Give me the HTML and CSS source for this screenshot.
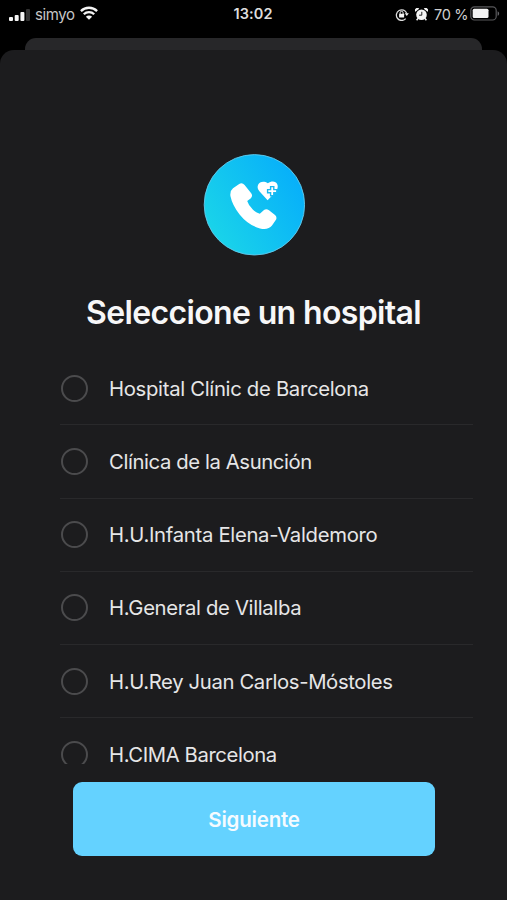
FILE: index.html
```html
<!DOCTYPE html>
<html lang="es">
<head>
<meta charset="utf-8">
<title>Seleccione un hospital</title>
<link rel="stylesheet" href="styles.css">
</head>
<body>
<header class="status">
  <div class="carrier">
    <svg class="signal" width="21" height="12" viewBox="0 0 21 12"><rect x="0" y="8" width="4" height="4" rx="1"/><rect x="5.7" y="6" width="4" height="6" rx="1"/><rect x="11.4" y="3" width="4" height="9" rx="1"/><rect x="17" y="0" width="4" height="12" rx="1" opacity=".2"/></svg>
    <span class="network">simyo</span>
    <svg class="wifi" width="18" height="14" viewBox="0 0 18 14"><g fill="none" stroke="#f4f4f4" stroke-width="2.3"><path d="M.9 5.1a11.5 11.5 0 0 1 16.2 0"/><path d="M3.8 8.2a7.4 7.4 0 0 1 10.4 0"/></g><path d="M9 13.8l-3.1-3.1a4.4 4.4 0 0 1 6.2 0z"/></svg>
  </div>
  <time class="clock">13:02</time>
  <div class="system">
    <svg class="lock" width="14" height="13" viewBox="0 0 14 13"><path d="M10.7 10.6A5.3 5.3 0 1 1 11.7 5.4" fill="none" stroke="#ddd" stroke-width="1.3"/><path d="M9.8 5.3h4l-2 2.8z"/><rect x="4.1" y="5.8" width="5" height="3.7" rx=".5"/><path d="M5.1 6V4.8a1.5 1.5 0 0 1 3 0V6" fill="none" stroke="#eee"/></svg>
    <svg class="alarm" width="13" height="13" viewBox="0 0 13 13"><path d="M.4 3.8A2.3 2.3 0 0 1 4.2.8zM12.6 3.8A2.3 2.3 0 0 0 8.8.8z"/><circle cx="6.5" cy="6.8" r="5.3"/><path d="M3.2 10.2l-1.6 2M9.8 10.2l1.6 2" stroke="#eee" stroke-width="1.5"/><path d="M6.8 3.8v3.4H4.1" fill="none" stroke="#222" stroke-width="1"/></svg>
    <span class="percent">70 %</span>
    <svg class="battery" width="30" height="15" viewBox="0 0 30 15"><rect x=".8" y=".8" width="25.4" height="13.2" rx="3.6" fill="none" stroke="#58585b" stroke-width="1.2"/><rect x="2.7" y="2.7" width="15.8" height="9.4" rx="1.5"/><path d="M27.6 5.2c2 .8 2 3.8 0 4.6z" fill="#66666a"/></svg>
  </div>
</header>
<div class="back-card"></div>
<main class="sheet">
  <div class="logo">
    <svg width="102" height="102" viewBox="0 0 102 102">
      <defs><linearGradient id="sky" x1="0" y1=".8" x2="1" y2=".2"><stop offset="0" stop-color="#1bd6e8"/><stop offset="1" stop-color="#06adfb"/></linearGradient></defs>
      <circle cx="51.4" cy="50.8" r="50.2" fill="url(#sky)" stroke="#62c9ec" stroke-width=".9"/>
      <path class="white" d="M30 34.3L36.2 30Q39.2 28.3 41.6 31.1L48.2 39.2Q50.2 42 47.6 44.4L44.2 47.1Q45.4 51.5 50 55.8Q53 58.6 56.8 59.8L61 56Q63.2 54.2 66 56.2L72 61.1Q74.6 63.4 72.6 66.3L69 71.5Q65.2 76.2 57 74.4Q45.4 71.3 36.8 60.7Q29.4 51.6 27.4 42Q26.8 36.8 30 34.3Z"/>
      <path class="white" d="M64.6 46.3L56.4 37.2C51.4 31.5 58 24.6 64.8 29.3C71.7 24.6 77.2 30.4 73.7 36.1Q69.9 41.4 64.6 46.3Z"/>
      <path class="plus" d="M67.6 32.6h3.2v3h3v3.2h-3v3h-3.2v-3h-3v-3.2h3z"/>
    </svg>
  </div>
  <h1 class="title">Seleccione un hospital</h1>
  <ul class="hospitals">
    <li class="row"><span class="radio"></span><span class="name n1">Hospital Clínic de Barcelona</span></li>
    <li class="row"><span class="radio"></span><span class="name n2">Clínica de la Asunción</span></li>
    <li class="row"><span class="radio"></span><span class="name n3">H.U.Infanta Elena-Valdemoro</span></li>
    <li class="row"><span class="radio"></span><span class="name n4">H.General de Villalba</span></li>
    <li class="row"><span class="radio"></span><span class="name n5">H.U.Rey Juan Carlos-Móstoles</span></li>
    <li class="row"><span class="radio"></span><span class="name n6">H.CIMA Barcelona</span></li>
  </ul>
  <button class="next">Siguiente</button>
</main>
</body>
</html>
```

FILE: styles.css
```css
* { box-sizing: border-box; }
body { margin: 0; width: 507px; height: 900px; overflow: hidden; background: #000; font-family: Inter, "Liberation Sans", sans-serif; color: #e6e6e7; }
svg { display: block; flex: none; fill: #f4f4f4; }
.status { display: grid; grid-template-columns: 1fr auto 1fr; height: 38px; padding: 0 7px 0 9px; }
.carrier, .system { display: flex; height: 28px; align-items: center; }
.carrier { color: #c6c6c6; font-size: 15px; }
.signal { margin-top: 1px; }
.network { margin-left: 5px; width: 40px; white-space: nowrap; letter-spacing: -.4px; }
.wifi { margin-left: 5px; margin-top: -2px; }
.clock { margin-left: -3px; font-size: 14.5px; line-height: 28px; font-weight: 600; letter-spacing: .1px; color: #dedede; }
.system { justify-content: flex-end; font-size: 14.5px; color: #d0d0d0; }
.alarm { margin-left: 6px; }
.percent { margin-left: 6px; width: 34px; white-space: nowrap; letter-spacing: -.3px; }
.battery { margin: -1px 0 0 2px; }
.back-card { height: 12px; margin: 0 25px; border-radius: 11px 11px 0 0; background: #272729; }
.sheet { height: 850px; padding-top: 103px; border-radius: 14px 14px 0 0; background: #1c1c1e; display: flex; flex-direction: column; }
.logo { margin-left: 203px; height: 102px; padding-top: .5px; }
.white { fill: #fff; }
.plus { fill: #fff; stroke: #18b9f1; stroke-width: 1.4; }
.title { margin: 38px 0 0; height: 40px; line-height: 40px; text-align: center; font-size: 32px; font-weight: 600; letter-spacing: -.64px; color: #f7f7f8; white-space: nowrap; }
.hospitals { list-style: none; margin: 19px 34px 0 60px; padding: 0; height: 412px; overflow: hidden; }
.row { height: 73.25px; display: flex; align-items: center; gap: 20px; padding-left: 1px; border-bottom: 1px solid #29292b; }
.radio { flex: none; width: 27px; height: 27px; margin-right: 1px; border: 2px solid #4b4b4d; border-radius: 50%; }
.name { padding-top: 1px; font-size: 20.3px; line-height: 18px; white-space: nowrap; }
.n1 { letter-spacing: -.31px; }
.n2 { letter-spacing: -.4px; }
.n3 { letter-spacing: -.3px; }
.n4 { letter-spacing: -.34px; }
.n5 { letter-spacing: -.36px; }
.n6 { letter-spacing: -.39px; }
.next { margin: 18px 72px 0 73px; height: 74px; flex: none; border: 0; border-radius: 9px; background: #64d2ff; color: #f5fbff; font: 600 20.5px Inter, sans-serif; letter-spacing: -.2px; }
```
